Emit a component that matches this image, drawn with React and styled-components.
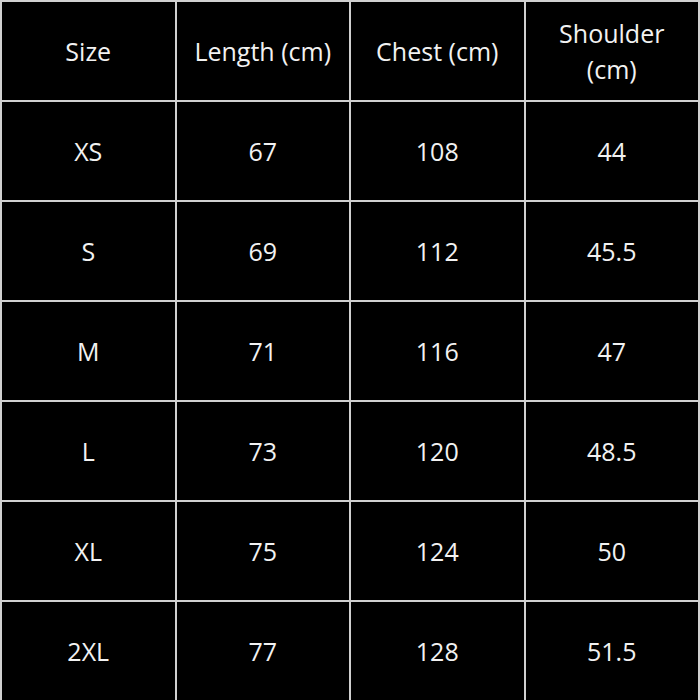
import React from "react";
import styled, { createGlobalStyle } from "styled-components";

const GlobalStyle = createGlobalStyle`
  html, body {
    margin: 0;
    padding: 0;
    background: #000;
  }
`;

const headers = ["Size", "Length (cm)", "Chest (cm)", "Shoulder (cm)"];

const rows = [
  ["XS", "67", "108", "44"],
  ["S", "69", "112", "45.5"],
  ["M", "71", "116", "47"],
  ["L", "73", "120", "48.5"],
  ["XL", "75", "124", "50"],
  ["2XL", "77", "128", "51.5"],
];

const SizeChart = () => {
  return (
    <Wrapper>
      <GlobalStyle />
      {headers.map((h) => (
        <Cell key={h}>
          <HeadText>{h}</HeadText>
        </Cell>
      ))}
      {rows.map((row) =>
        row.map((value, i) => <Cell key={row[0] + i}>{value}</Cell>)
      )}
    </Wrapper>
  );
};

export default SizeChart;

const Wrapper = styled.div`
  width: 700px;
  height: 700px;
  box-sizing: border-box;
  background: #000;
  display: grid;
  grid-template-columns: repeat(4, 1fr);
  grid-template-rows: repeat(7, 1fr);
  border-right: 2px solid #d0d0d0;
  font-family: "Open Sans", "Liberation Sans", sans-serif;
`;

const Cell = styled.div`
  display: flex;
  align-items: center;
  justify-content: center;
  text-align: center;
  border-left: 2px solid #d0d0d0;
  border-top: 2px solid #d0d0d0;
  color: #f2f2f2;
  font-size: 25px;
`;

const HeadText = styled.span`
  line-height: 36px;
  max-width: 148px;
`;
